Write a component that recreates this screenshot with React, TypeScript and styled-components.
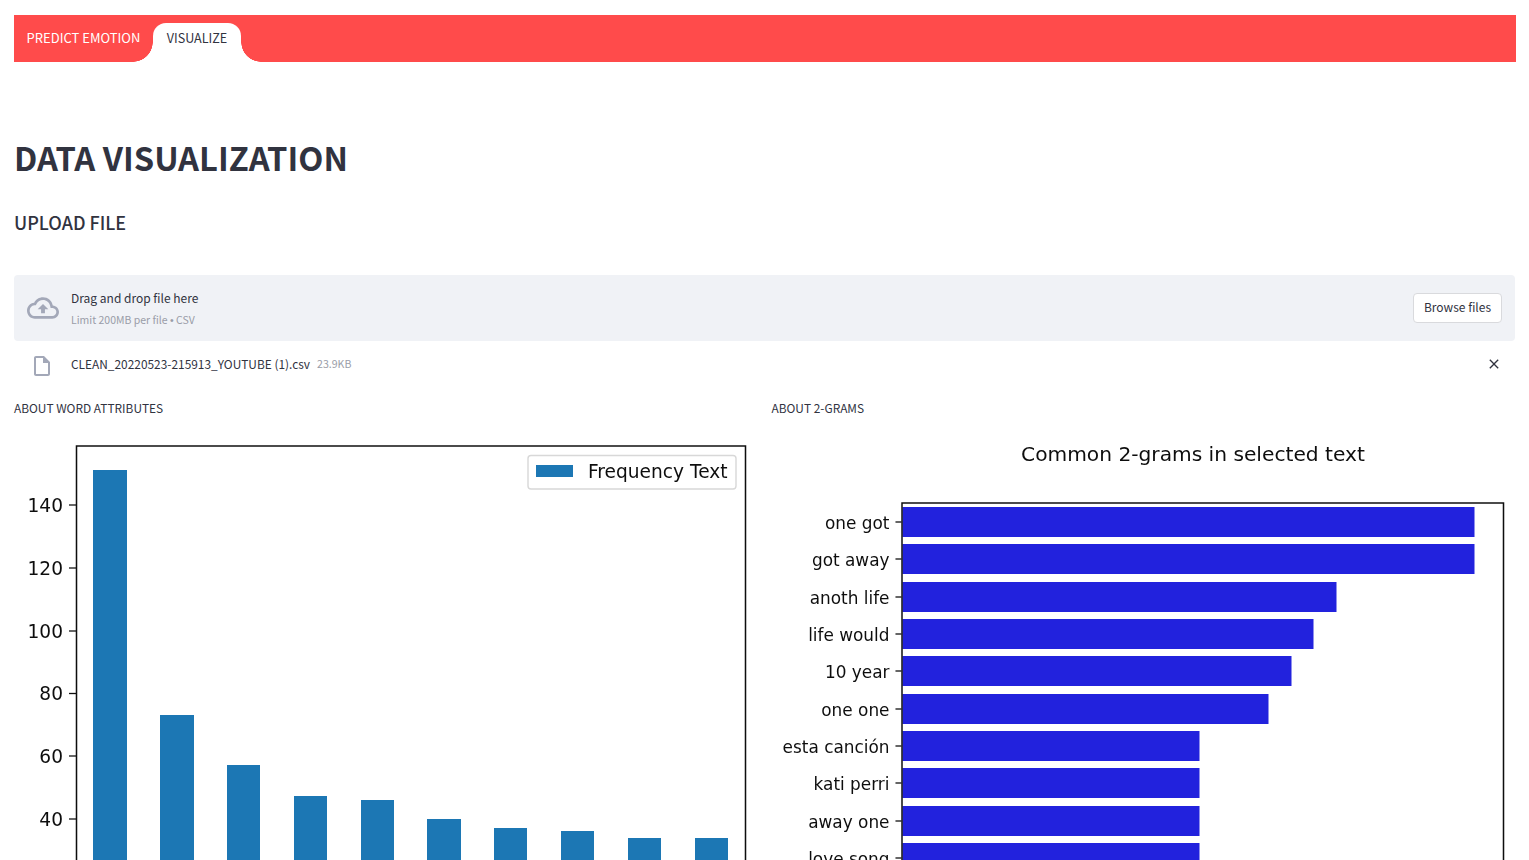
import React from "react";
import styled, { createGlobalStyle } from "styled-components";

const SANS = `"Noto Sans CJK SC", "Source Sans Pro", "Noto Sans", sans-serif`;
const RED = "#ff4b4b";
const INK = "#31333f";

const Global = createGlobalStyle`
  html, body { margin: 0; padding: 0; background: #fff; height: 860px; overflow: hidden; }
  body { font-family: ${SANS}; color: ${INK}; }
`;

const Page = styled.div`
  height: 860px;
  overflow: hidden;
  padding: 15px 14px 0;
  box-sizing: border-box;
`;

const TabBar = styled.nav`
  display: flex;
  align-items: flex-end;
  height: 47px;
  width: 1502px;
  background: ${RED};
`;

const Tab = styled.div<{ $active?: boolean }>`
  position: relative;
  box-sizing: border-box;
  height: ${(p) => (p.$active ? "39px" : "47px")};
  display: flex;
  align-items: center;
  justify-content: center;
  width: ${(p) => (p.$active ? "88px" : "139px")};
  padding-bottom: ${(p) => (p.$active ? "9px" : "1px")};
  font-size: ${(p) => (p.$active ? "12.6px" : "13px")};
  line-height: 16px;
  color: ${(p) => (p.$active ? INK : "#fff")};
  background: ${(p) => (p.$active ? "#fff" : "transparent")};
  border-radius: 13px 13px 0 0;

  ${(p) =>
    p.$active &&
    `
    &::before, &::after {
      content: "";
      position: absolute;
      bottom: 0;
      width: 20px;
      height: 20px;
    }
    &::before {
      left: -20px;
      background: radial-gradient(circle at 0 0, ${RED} 19.5px, #fff 20px);
    }
    &::after {
      right: -20px;
      background: radial-gradient(circle at 100% 0, ${RED} 19.5px, #fff 20px);
    }
  `}
`;

const Title = styled.h1`
  margin: 72px 0 0;
  font-size: 32.7px;
  line-height: 46px;
  font-weight: 700;
  color: ${INK};
`;

const Subtitle = styled.h3`
  margin: 29px 0 0;
  font-size: 18px;
  line-height: 26px;
  font-weight: 500;
  color: ${INK};
`;

const Dropzone = styled.section`
  margin-top: 40px;
  height: 66px;
  width: 1501px;
  box-sizing: border-box;
  display: flex;
  align-items: center;
  gap: 12px;
  padding: 0 13px 0 13px;
  background: #f0f2f6;
  border-radius: 4px;
`;

const CloudIcon = styled.svg`
  width: 32px;
  height: 32px;
  fill: #a3a8b8;
  flex: none;
`;

const DropText = styled.div`
  flex: 1;
  display: flex;
  flex-direction: column;
  gap: 6px;
  padding-top: 1px;
`;

const DropTitle = styled.span`
  font-size: 12px;
  line-height: 16px;
  color: ${INK};
`;

const DropHint = styled.span`
  font-size: 10.5px;
  line-height: 16px;
  color: #9a9da8;
`;

const HintBullet = styled.span`
  font-family: "Liberation Sans", sans-serif;
`;

const BrowseButton = styled.button`
  width: 89px;
  height: 30px;
  padding: 0 0 3px;
  background: #fff;
  border: 1px solid #d9dadd;
  border-radius: 4px;
  font-family: ${SANS};
  font-size: 12px;
  color: ${INK};
`;

const FileRow = styled.div`
  height: 46px;
  width: 1501px;
  box-sizing: border-box;
  display: flex;
  align-items: center;
  padding: 0 13.5px 1px 16px;
`;

const FileIcon = styled.svg`
  width: 24px;
  height: 24px;
  fill: #a3a8b8;
  flex: none;
  margin: 4px 17px 0 0;
`;

const FileName = styled.span`
  font-size: 11.9px;
  line-height: 16px;
  color: ${INK};
`;

const FileSize = styled.span`
  font-size: 10.6px;
  line-height: 16px;
  color: #9a9da8;
  margin-left: 7px;
  flex: 1;
`;

const CloseIcon = styled.svg`
  width: 16px;
  height: 16px;
  fill: ${INK};
  flex: none;
`;

const Columns = styled.div`
  display: grid;
  grid-template-columns: 743.5px 743.5px;
  column-gap: 14px;
  margin-top: 13px;
`;

const Column = styled.div`
  display: flex;
  flex-direction: column;
`;

const ColumnLabel = styled.div`
  font-size: 11.9px;
  line-height: 16px;
  color: ${INK};
`;

const Chart = styled.svg`
  display: block;
  margin-top: 16px;
  width: 744px;
  height: 440px;
  overflow: hidden;
  font-family: "DejaVu Sans", sans-serif;
`;

const Y0 = 432;
const X0L = 14;
const leftBars: [number, number, number][] = [
  [93, 127, 470], [160, 194, 715], [227, 260, 765], [294, 327, 796], [361, 394, 800],
  [427, 461, 819], [494, 527, 828], [561, 594, 831], [628, 661, 838], [695, 728, 838],
];
const leftTicks: [string, number][] = [
  ["140", 505], ["120", 568], ["100", 631], ["80", 693.5], ["60", 756], ["40", 819],
];

const LeftChart = () => (
  <Chart viewBox="0 0 744 440">
    <defs>
      <filter id="soft-a" x="-2%" y="-2%" width="104%" height="104%">
        <feGaussianBlur stdDeviation="0.55" />
      </filter>
    </defs>
    <g filter="url(#soft-a)">
      {leftBars.map(([a, b, top]) => (
        <rect key={a} x={a - X0L} y={top - Y0} width={b - a} height={480} fill="#1f77b4" />
      ))}
      <path
        d={`M${76.5 - X0L} 460 V${446 - Y0} H${745.5 - X0L} V460`}
        fill="none"
        stroke="#111"
        strokeWidth="1.5"
      />
      {leftTicks.map(([label, y]) => (
        <g key={label}>
          <line x1={69 - X0L} x2={76 - X0L} y1={y - Y0} y2={y - Y0} stroke="#111" strokeWidth="1.3" />
          <text x={63 - X0L} y={y - Y0 + 6.5} textAnchor="end" fontSize="18.6" fill="#111">
            {label}
          </text>
        </g>
      ))}
      <rect x={528 - X0L} y={455.5 - Y0} width={208} height={33.5} rx="3" fill="#fff" stroke="#d8d8d8" strokeWidth="1.4" />
      <rect x={536 - X0L} y={465 - Y0} width={37} height={12} fill="#1f77b4" />
      <text x={588 - X0L} y={478 - Y0} fontSize="18.6" fill="#111">
        Frequency Text
      </text>
    </g>
  </Chart>
);

const X0R = 771.5;
const rightRows: [string, number, number][] = [
  ["one got", 507, 1474], ["got away", 544, 1474], ["anoth life", 582, 1336], ["life would", 619, 1313],
  ["10 year", 656, 1291], ["one one", 694, 1268], ["esta canción", 731, 1199], ["kati perri", 768, 1199],
  ["away one", 806, 1199], ["love song", 843, 1199],
];

const RightChart = () => (
  <Chart viewBox="0 0 744 440">
    <defs>
      <filter id="soft-b" x="-2%" y="-2%" width="104%" height="104%">
        <feGaussianBlur stdDeviation="0.55" />
      </filter>
    </defs>
    <g filter="url(#soft-b)">
      <text x={1192.5 - X0R} y={461 - Y0} textAnchor="middle" fontSize="20.2" fill="#111">
        Common 2-grams in selected text
      </text>
      {rightRows.map(([label, top, right]) => (
        <g key={label}>
          <rect x={902 - X0R} y={top - Y0} width={right - 902} height={30} fill="#2020dd" />
          <line x1={895 - X0R} x2={901 - X0R} y1={top + 15 - Y0} y2={top + 15 - Y0} stroke="#111" strokeWidth="1.3" />
          <text x={889 - X0R} y={top + 21.6 - Y0} textAnchor="end" fontSize="16.9" fill="#111">
            {label}
          </text>
        </g>
      ))}
      <path
        d={`M${901.5 - X0R} 460 V${503 - Y0} H${1503 - X0R} V460`}
        fill="none"
        stroke="#111"
        strokeWidth="1.5"
      />
    </g>
  </Chart>
);

export default function App() {
  return (
    <>
      <Global />
      <Page>
        <TabBar>
          <Tab>PREDICT EMOTION</Tab>
          <Tab $active>VISUALIZE</Tab>
        </TabBar>
        <Title>DATA VISUALIZATION</Title>
        <Subtitle>UPLOAD FILE</Subtitle>
        <Dropzone>
          <CloudIcon viewBox="0 0 24 24">
            <path d="M19.35 10.04C18.67 6.59 15.64 4 12 4 9.11 4 6.6 5.64 5.35 8.04 2.34 8.36 0 10.91 0 14c0 3.31 2.69 6 6 6h13c2.76 0 5-2.24 5-5 0-2.64-2.05-4.78-4.65-4.96zM19 18H6c-2.21 0-4-1.79-4-4 0-2.05 1.53-3.76 3.56-3.97l1.07-.11.5-.95C8.08 7.14 9.94 6 12 6c2.62 0 4.88 1.86 5.39 4.43l.3 1.5 1.53.11c1.56.1 2.78 1.41 2.78 2.96 0 1.65-1.35 3-3 3zM8 13h2.55v3h2.9v-3H16l-4-4z" />
          </CloudIcon>
          <DropText>
            <DropTitle>Drag and drop file here</DropTitle>
            <DropHint>
              Limit 200MB per file <HintBullet>•</HintBullet> CSV
            </DropHint>
          </DropText>
          <BrowseButton>Browse files</BrowseButton>
        </Dropzone>
        <FileRow>
          <FileIcon viewBox="0 0 24 24">
            <path d="M14 2H6c-1.1 0-1.99.9-1.99 2L4 20c0 1.1.89 2 1.99 2H18c1.1 0 2-.9 2-2V8l-6-6zM6 20V4h7v5h5v11H6z" />
          </FileIcon>
          <FileName>CLEAN_20220523-215913_YOUTUBE (1).csv</FileName>
          <FileSize>23.9KB</FileSize>
          <CloseIcon viewBox="0 0 24 24">
            <path d="M19 6.41L17.59 5 12 10.59 6.41 5 5 6.41 10.59 12 5 17.59 6.41 19 12 13.41 17.59 19 19 17.59 13.41 12z" />
          </CloseIcon>
        </FileRow>
        <Columns>
          <Column>
            <ColumnLabel>ABOUT WORD ATTRIBUTES</ColumnLabel>
            <LeftChart />
          </Column>
          <Column>
            <ColumnLabel>ABOUT 2-GRAMS</ColumnLabel>
            <RightChart />
          </Column>
        </Columns>
      </Page>
    </>
  );
}
